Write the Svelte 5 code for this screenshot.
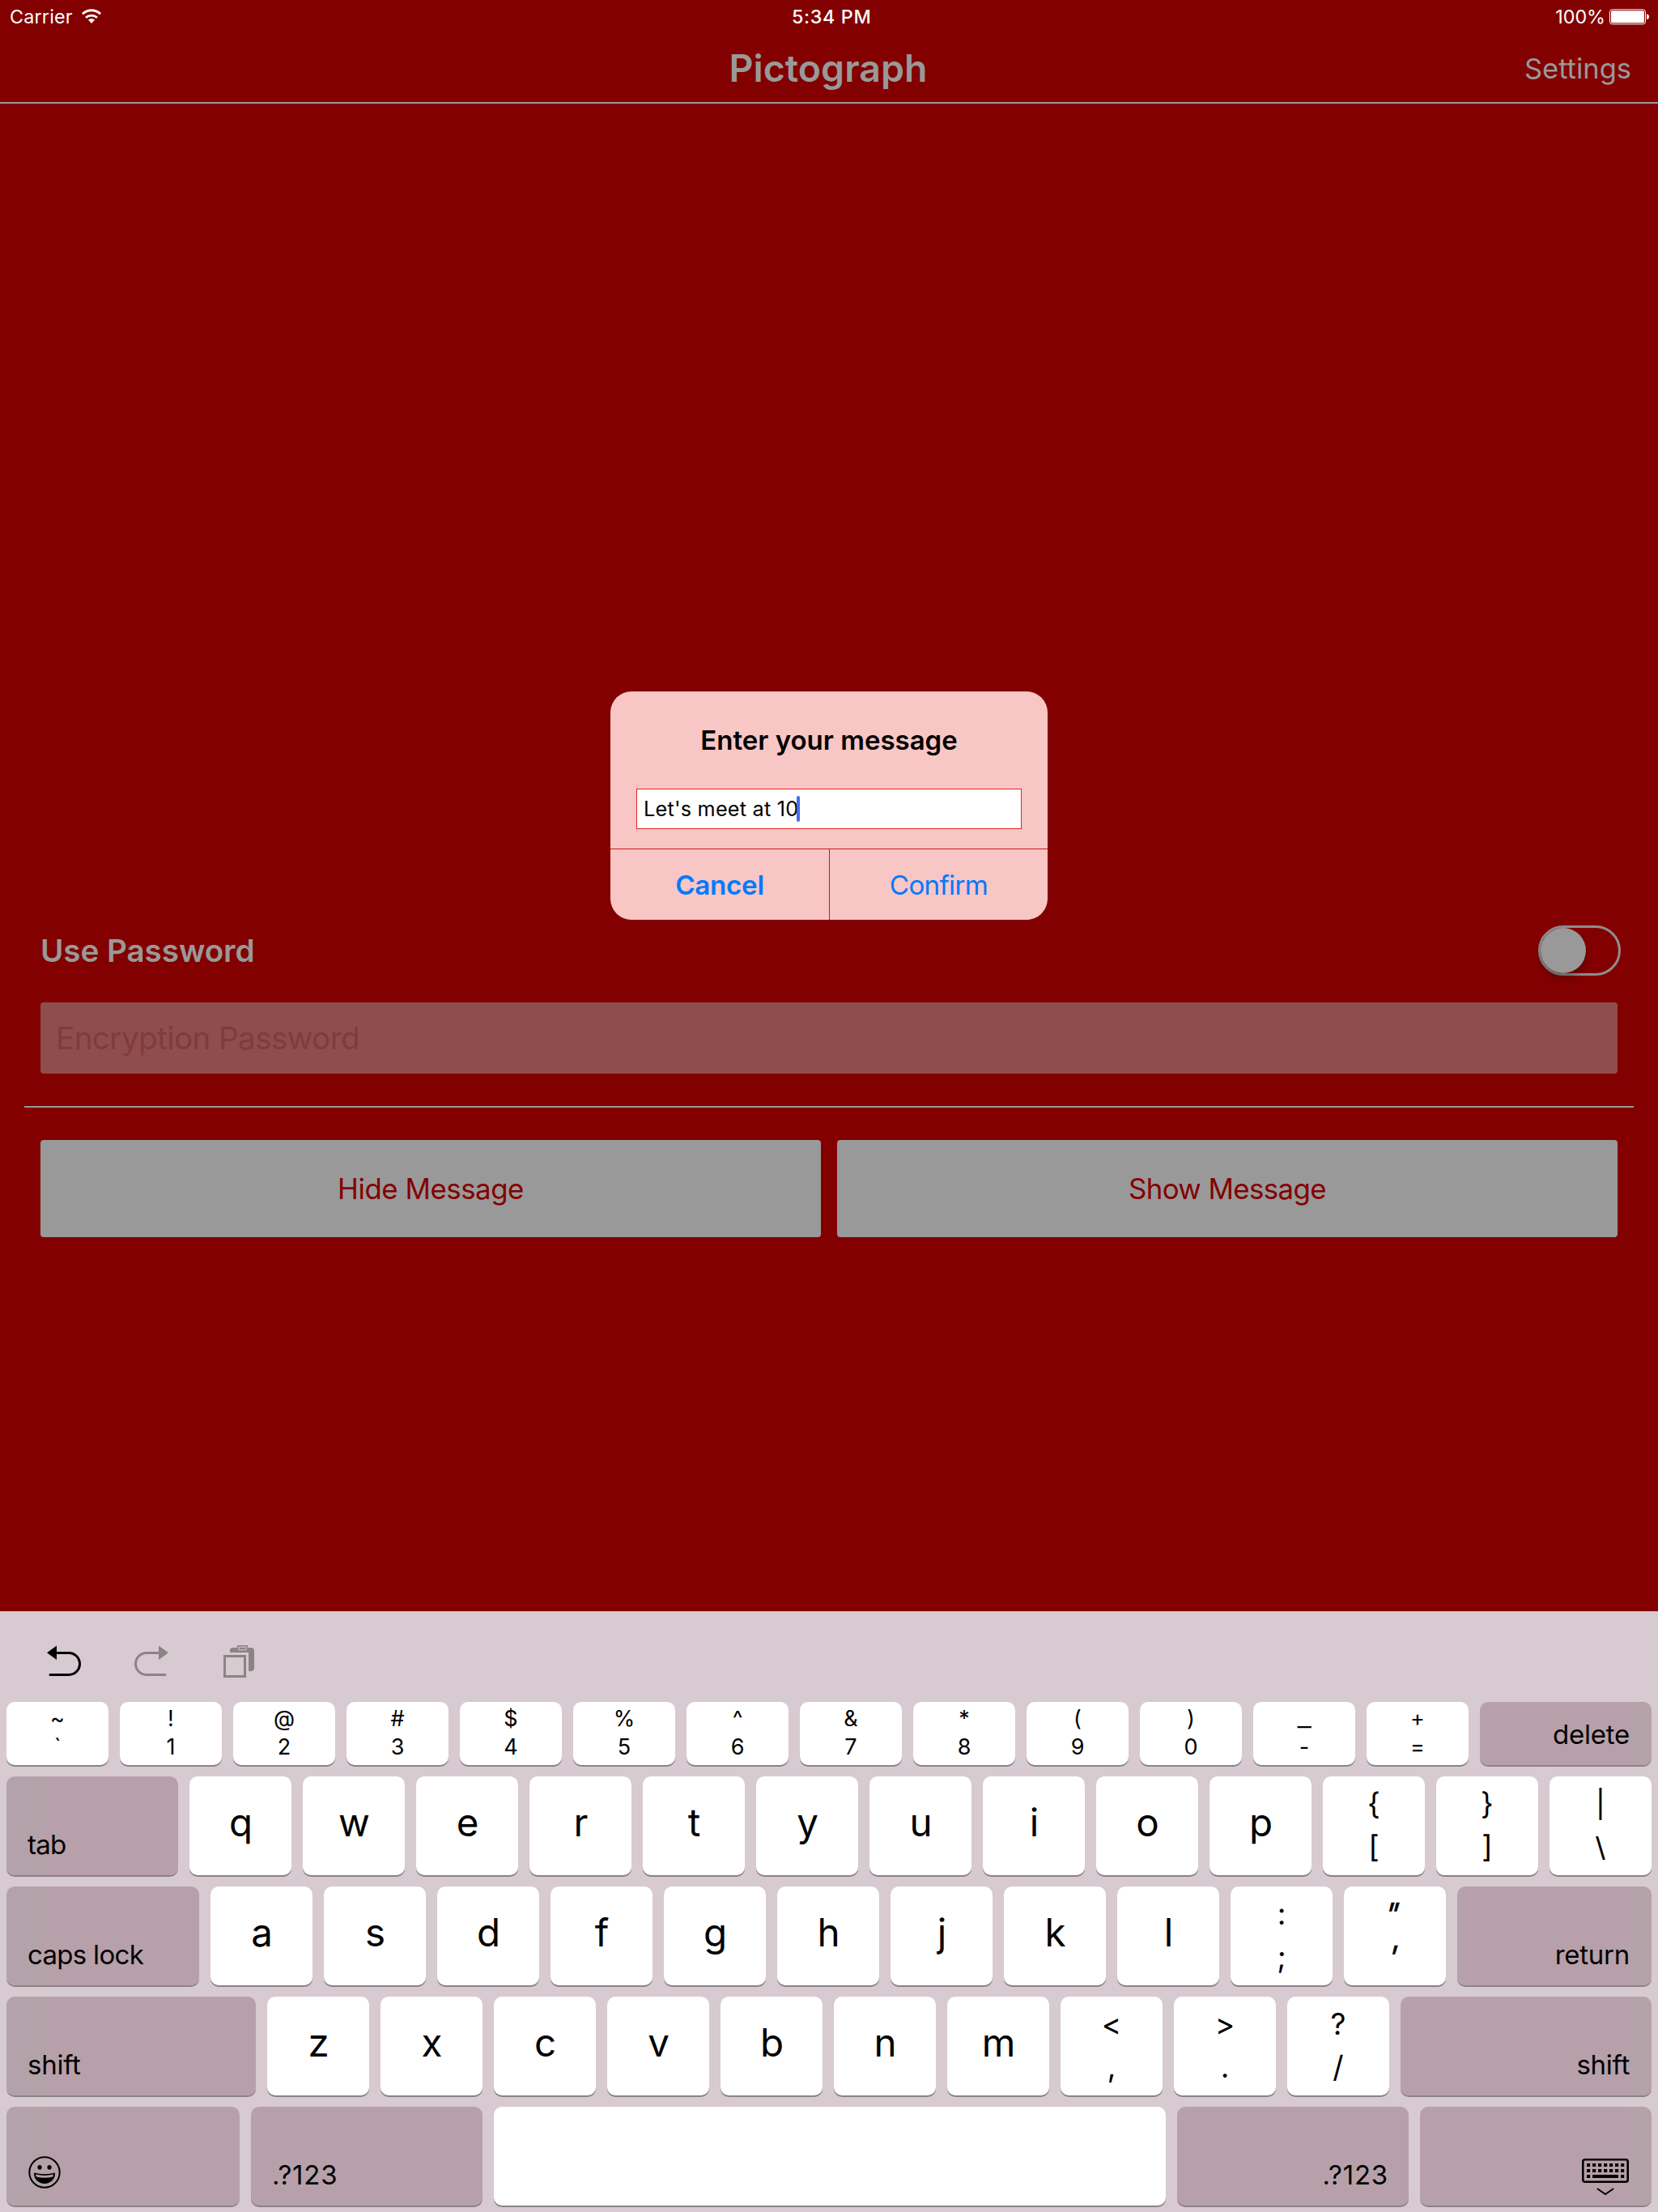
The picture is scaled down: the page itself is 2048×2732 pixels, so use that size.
<script>
  const pair = (top, bottom, cls = '') => ({ kind: 'pair', top, bottom, cls });
  const letters = (s) => s.split('').map((label) => ({ kind: 'letter', label }));
  const mod = (label, cls, icon = null) => ({ kind: 'mod', label, cls, icon });

  const rows = [
    [
      ...['~`', '!1', '@2', '#3', '$4', '%5', '^6', '&7', '*8', '(9', ')0'].map((p) => pair(p[0], p[1])),
      pair('_', '-', 'wide'),
      pair('+', '='),
      mod('delete', 'grow right delete')
    ],
    [mod('tab', 'tab'), ...letters('qwertyuiop'), pair('{', '['), pair('}', ']'), pair('|', '\\', 'bar')],
    [mod('caps lock', 'caps'), ...letters('asdfghjkl'), pair(':', ';'), pair('"', "'", 'slant'), mod('return', 'grow right')],
    [mod('shift', 'shift'), ...letters('zxcvbnm'), pair('<', ','), pair('>', '.'), pair('?', '/'), mod('shift', 'grow right')],
    [
      mod('', 'emoji', 'emoji'),
      mod('.?123', 'num'),
      { kind: 'space' },
      mod('.?123', 'num right'),
      mod('', 'dismiss right', 'dismiss')
    ]
  ];

  const dots = [];
  for (let r = 0; r < 3; r++) {
    for (let c = 0; c < 7; c++) {
      if (r < 2 || c === 0 || c === 6) dots.push([6 + c * 7, 6 + r * 7]);
    }
  }
</script>

<div class="screen">
  <header>
    <div class="status">
      <div class="carrier">
        <span>Carrier</span>
        <svg class="wifi" viewBox="0 0 24 18" width="24" height="18">
          <path d="M1 6.2A16 16 0 0 1 23 6.2" fill="none" stroke="#fff" stroke-width="3" />
          <path d="M5 10.8A10.3 10.3 0 0 1 19 10.8" fill="none" stroke="#fff" stroke-width="2.8" />
          <path d="M12 18L8 13.6A6.2 6.2 0 0 1 16 13.6Z" fill="#fff" />
        </svg>
      </div>
      <div class="time">5:34 PM</div>
      <div class="power">
        <span>100%</span>
        <svg width="49" height="20" viewBox="0 0 49 20">
          <rect x="0.5" y="0.8" width="44" height="18" rx="3" fill="none" stroke="#fff" stroke-width="1" />
          <rect x="2" y="2.3" width="41" height="15" rx="1.5" fill="#fff" />
          <path d="M46 6.3q3 .6 3 3.4t-3 3.4z" fill="#fff" />
        </svg>
      </div>
    </div>
    <nav>
      <span></span>
      <h1>Pictograph</h1>
      <span class="settings">Settings</span>
    </nav>
  </header>

  <main>
    <div class="toggle-row">
      <span class="toggle-label">Use Password</span>
      <div class="switch"><div class="knob"></div></div>
    </div>
    <div class="field">Encryption Password</div>
    <div class="rule"></div>
    <div class="actions">
      <div class="action">Hide Message</div>
      <div class="action show">Show Message</div>
    </div>
  </main>

  <section class="keyboard">
    <div class="toolbar">
      <svg class="undo" width="44" height="40" viewBox="0 0 44 40">
        <path d="M10 9.5H27A13.500 13.500 0 0 1 27 36.5H4" fill="none" stroke="#000" stroke-width="3" stroke-linecap="round" />
        <path d="M0 9.3L12 .6V18z" fill="#000" />
      </svg>
      <svg class="redo" width="44" height="40" viewBox="0 0 44 40">
        <path d="M32 9.5H15A13.500 13.500 0 0 0 15 36.5H38" fill="none" stroke="#8c8387" stroke-width="3" stroke-linecap="round" />
        <path d="M42 9.3L30 .6V18z" fill="#8c8387" />
      </svg>
      <svg class="paste" width="38" height="40" viewBox="0 0 38 40">
        <rect x="1.5" y="13.5" width="25" height="25" fill="none" stroke="#8c8387" stroke-width="3" />
        <path d="M8 9V7Q8 3 12 3H34Q38 3 38 7V28Q38 32 34 32H31V9z" fill="#8c8387" />
        <rect x="17" y="0" width="13" height="7" fill="#8c8387" />
        <rect x="19" y="2.2" width="9" height="3.6" fill="none" stroke="#d7cad0" stroke-width="1" />
      </svg>
    </div>
    {#each rows as row, i}
      <div class="row" class:short={i === 0}>
        {#each row as key}
          {#if key.kind === 'letter'}
            <div class="key letter">{key.label}</div>
          {:else if key.kind === 'pair'}
            <div class="key pair {key.cls}"><span>{key.top}</span><span>{key.bottom}</span></div>
          {:else if key.kind === 'space'}
            <div class="key space"></div>
          {:else}
            <div class="key mod {key.cls}">
              {#if key.icon === 'emoji'}
                <svg width="40" height="40" viewBox="0 0 40 40">
                  <circle cx="20" cy="20" r="18.7" fill="none" stroke="#000" stroke-width="2" />
                  <ellipse cx="14" cy="13.8" rx="2.6" ry="2.9" />
                  <ellipse cx="26" cy="13.8" rx="2.6" ry="2.9" />
                  <path d="M7 20.5Q20 24 33 20.5Q33 27 29.5 30.3Q25.5 34 20 34T10.5 30.3Q7 27 7 20.5z" />
                  <path d="M9 22.6Q20 25.2 31 22.6L30.2 25.4Q20 28.2 9.8 25.4z" fill="#b7a0aa" />
                </svg>
              {:else if key.icon === 'dismiss'}
                <svg width="58" height="48" viewBox="0 0 58 48">
                  <rect x="1.3" y="1.3" width="55.4" height="27.4" rx="2.5" fill="none" stroke="#000" stroke-width="2.6" />
                  {#each dots as [x, y]}
                    <rect {x} {y} width="4.2" height="4" />
                  {/each}
                  <rect x="13" y="20" width="32" height="4" />
                  <path d="M19.5 37.5L29 44L38.5 37.5" fill="none" stroke="#000" stroke-width="2" stroke-linecap="round" />
                </svg>
              {:else}
                {key.label}
              {/if}
            </div>
          {/if}
        {/each}
      </div>
    {/each}
  </section>

  <div class="alert">
    <h2>Enter your message</h2>
    <div class="input"><span>Let's meet at 10</span><i class="caret"></i></div>
    <div class="choices">
      <div class="cancel">Cancel</div>
      <div class="confirm">Confirm</div>
    </div>
  </div>
</div>

<style>
  :global(body) {
    margin: 0;
  }
  .screen {
    position: relative;
    display: flex;
    flex-direction: column;
    width: 2048px;
    height: 2732px;
    overflow: hidden;
    background: #830000;
    font-family: Inter, 'Liberation Sans', sans-serif;
    font-weight: 400;
    white-space: nowrap;
  }
  svg {
    display: block;
    flex: none;
  }

  /* Status bar and navigation */
  header {
    box-sizing: border-box;
    height: 128px;
    border-bottom: 2px solid #999;
  }
  .status {
    display: grid;
    grid-template-columns: 978px 1fr auto;
    height: 40px;
    line-height: 41px;
    font-size: 23.3px;
    color: #fff;
  }
  .carrier {
    display: flex;
    padding-left: 12px;
    letter-spacing: 0.2px;
  }
  .wifi {
    margin: 11px 0 0 11px;
  }
  .time {
    font-weight: 550;
    letter-spacing: 0.66px;
  }
  .power {
    display: flex;
    gap: 5px;
    padding-right: 11px;
  }
  .power svg {
    margin-top: 11px;
  }
  nav {
    display: grid;
    grid-template-columns: 1fr auto 1fr;
    height: 86px;
  }
  h1 {
    margin: 0 1px 0 -1px;
    font-size: 46.5px;
    font-weight: 600;
    line-height: 88px;
    color: #999;
  }
  .settings {
    padding-right: 33px;
    font-size: 34.5px;
    line-height: 90px;
    text-align: right;
    color: #999;
  }

  /* Form */
  main {
    padding: 1015px 50px 0;
  }
  .toggle-row {
    display: flex;
    justify-content: space-between;
    margin-right: -4px;
  }
  .toggle-label {
    font-size: 38.7px;
    font-weight: 600;
    line-height: 62px;
    letter-spacing: -0.1px;
    color: #999;
  }
  .switch {
    box-sizing: border-box;
    width: 102px;
    height: 62px;
    border: 3px solid #8e8e8e;
    border-radius: 31px;
  }
  .knob {
    width: 56px;
    height: 56px;
    border-radius: 50%;
    background: #999;
    box-shadow: 0 6px 10px rgba(0, 0, 0, 0.28);
  }
  .field {
    margin-top: 33px;
    padding-left: 19px;
    height: 88px;
    border-radius: 4px;
    background: #8f4d4e;
    font-size: 38.7px;
    line-height: 88px;
    letter-spacing: -0.62px;
    color: #7f3c3d;
  }
  .rule {
    height: 2px;
    margin: 40px -20px;
    background: #999;
  }
  .actions {
    display: grid;
    grid-template-columns: 1fr 1fr;
    gap: 20px;
  }
  .action {
    height: 120px;
    border-radius: 4px;
    background: #999;
    font-size: 34.8px;
    line-height: 120px;
    letter-spacing: -0.45px;
    text-align: center;
    color: #830000;
  }
  .action.show {
    letter-spacing: -0.58px;
  }

  /* Alert */
  .alert {
    position: absolute;
    top: 854px;
    left: 754px;
    width: 540px;
    height: 282px;
    border-radius: 26px;
    overflow: hidden;
    background: #f8c6c5;
  }
  h2 {
    margin: 0;
    font-size: 33px;
    font-weight: 600;
    line-height: 120px;
    text-align: center;
    color: #000;
  }
  .input {
    box-sizing: border-box;
    display: flex;
    margin: 0 32px 24px;
    padding-left: 8px;
    height: 50px;
    border: 1px solid #e2231f;
    background: #fff;
    font-size: 25.2px;
    line-height: 48px;
    letter-spacing: 0.25px;
    color: #000;
  }
  .caret {
    width: 4px;
    height: 32px;
    margin: 8px 0 0 -2px;
    border-radius: 2px;
    background: #456cee;
  }
  .choices {
    display: grid;
    grid-template-columns: 270px 1fr;
    height: 87px;
    border-top: 1px solid #d3151a;
    font-size: 33.2px;
    line-height: 89px;
    text-align: center;
    color: #007aff;
  }
  .cancel {
    font-weight: 600;
    letter-spacing: -0.3px;
  }
  .confirm {
    border-left: 1px solid #d3151a;
    letter-spacing: -0.7px;
  }

  /* Keyboard */
  .keyboard {
    display: flex;
    flex-direction: column;
    gap: 14px;
    box-sizing: border-box;
    height: 742px;
    margin-top: auto;
    padding: 0 8px;
    background: #d7cad0;
    color: #000;
  }
  .toolbar {
    display: flex;
    box-sizing: border-box;
    height: 98px;
    padding: 42px 0 0 50px;
  }
  .redo {
    margin-left: 64px;
  }
  .paste {
    margin-left: 66px;
  }
  .row {
    display: flex;
    gap: 14px;
    height: 122px;
  }
  .row.short {
    height: 78px;
  }
  .key {
    box-sizing: border-box;
    flex: none;
    width: 126px;
    border-radius: 10px;
    background: #fff;
    box-shadow: 0 2px 0 #8b8286;
  }
  .letter {
    padding: 26px 0 0 1px;
    font-size: 47.500px;
    line-height: 61px;
    text-align: center;
  }
  .pair {
    display: flex;
    flex-direction: column;
    align-items: center;
    padding-top: 7px;
    font-size: 37px;
    line-height: 53px;
  }
  .short .pair {
    padding-top: 4px;
    font-size: 27px;
    line-height: 34.7px;
  }
  .wide span:first-child {
    transform: scaleX(1.4);
  }
  .bar span {
    transform: scaleY(0.9);
  }
  .slant {
    padding-right: 5px;
  }
  .slant span {
    transform: skewX(-16deg);
    -webkit-text-stroke: 0.6px #000;
  }
  .slant span:first-child {
    letter-spacing: 1px;
  }
  .space {
    flex: 1;
  }
  .mod {
    display: flex;
    align-items: flex-end;
    padding: 0 27px 18px 26px;
    background: linear-gradient(90deg, #b3a2aa 0, #b4a2a9 44px, #b7a0aa 50px);
    font-size: 33px;
    line-height: 40px;
    letter-spacing: -0.25px;
  }
  .mod.right {
    justify-content: flex-end;
    background: linear-gradient(270deg, #b3a2a9 0, #b4a2a9 20px, #b7a0aa 30px);
  }
  .mod.grow {
    flex: 1;
  }
  .mod.tab {
    width: 212px;
    letter-spacing: -0.8px;
  }
  .mod.caps {
    width: 238px;
    letter-spacing: -0.7px;
  }
  .mod.shift {
    width: 308px;
  }
  .mod.emoji {
    width: 288px;
    padding: 0 0 21px 27px;
  }
  .mod.num {
    width: 286px;
    background: #b7a0aa;
    letter-spacing: 0.8px;
  }
  .mod.num.right {
    padding-right: 25px;
  }
  .mod.dismiss {
    width: 286px;
    padding: 0 28px 10px;
  }
</style>
